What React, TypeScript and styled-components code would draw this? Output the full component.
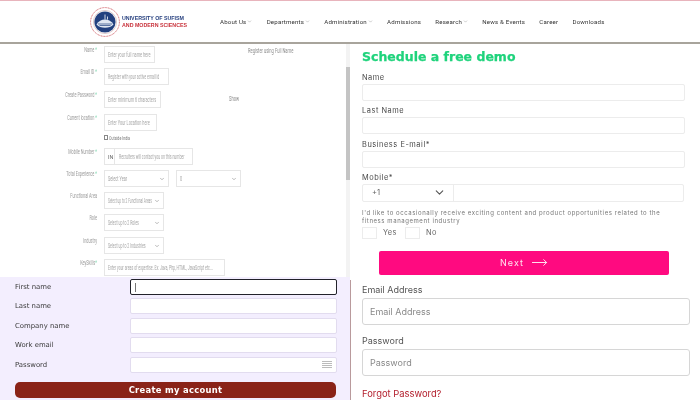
import React from 'react'
import styled, { createGlobalStyle } from 'styled-components'
import { ChevronDown, MoveRight } from 'lucide-react'

const GlobalStyle = createGlobalStyle`
  html, body {
    margin: 0;
    padding: 0;
    background: #fff;
  }
  * {
    box-sizing: border-box;
  }
`

const Page = styled.div`
  width: 700px;
  height: 400px;
  overflow: hidden;
  display: flex;
  flex-direction: column;
  background: #fff;
  filter: blur(0.35px);
`

const Header = styled.header`
  height: 44px;
  flex: none;
  display: flex;
  align-items: center;
  padding-left: 90px;
  border-top: 1px solid #e8b4bc;
  border-bottom: 2px solid #a8a49c;
`

const Brand = styled.div`
  width: 130px;
  display: flex;
  align-items: center;
  gap: 2px;
`

const BrandText = styled.div`
  font-family: 'Liberation Sans', sans-serif;
  font-size: 5.3px;
  font-weight: 700;
  line-height: 7px;
  white-space: nowrap;
  color: #27407f;
  & > span {
    display: block;
    color: #c8313a;
  }
`

const Nav = styled.nav`
  display: flex;
  gap: 14.2px;
`

const NavItem = styled.span`
  display: flex;
  align-items: center;
  gap: 1px;
  font-family: Roboto, sans-serif;
  font-size: 6.1px;
  letter-spacing: 0.2px;
  white-space: nowrap;
  color: #333;
  & svg {
    width: 5px;
    height: 5px;
    color: #888;
  }
`

const Columns = styled.div`
  flex: 1;
  display: grid;
  grid-template-columns: 350px 350px;
  min-height: 0;
`

const LeftColumn = styled.div`
  display: flex;
  flex-direction: column;
  min-height: 0;
`

const RegisterPanel = styled.section`
  height: 233px;
  flex: none;
  display: flex;
  overflow: hidden;
`

const RegisterForm = styled.form`
  flex: 1;
  padding-top: 2px;
  min-width: 0;
`

const Scrollbar = styled.div`
  width: 4px;
  flex: none;
  background: #f3f3f3;
  padding-top: 23px;
`

const ScrollThumb = styled.div`
  height: 113px;
  background: #c4c4c4;
`

const RegRow = styled.div<{ $top: number }>`
  display: flex;
  align-items: flex-start;
  margin-top: ${({ $top }) => $top}px;
`

const RegLabel = styled.label`
  display: block;
  width: 97px;
  flex: none;
  margin-right: 7px;
  text-align: right;
  transform: scaleX(0.6);
  transform-origin: right center;
  font-family: Roboto, sans-serif;
  font-size: 6.4px;
  line-height: 8px;
  white-space: nowrap;
  color: #9a9a9a;
`

const Required = styled.span`
  color: #7fd6b0;
`

const RegField = styled.div<{ $width: number }>`
  width: ${({ $width }) => $width}px;
  height: 17px;
  flex: none;
  display: flex;
  align-items: center;
  padding: 0 3px 0 3px;
  border: 1px solid #e6e6e6;
  font-family: Roboto, sans-serif;
  font-size: 6.4px;
  white-space: nowrap;
  overflow: hidden;
  color: #a6a6a6;
  & svg {
    width: 6px;
    height: 6px;
    flex: none;
    color: #777;
  }
`

const FieldText = styled.span<{ $squeeze?: number }>`
  flex: 1;
  min-width: 0;
  transform: scaleX(${({ $squeeze }) => $squeeze ?? 0.6});
  transform-origin: left center;
`

const PhonePrefix = styled.span`
  width: 10px;
  align-self: stretch;
  flex: none;
  display: flex;
  align-items: center;
  margin: 0 4px 0 -3px;
  padding-left: 3px;
  border-right: 1px solid #e6e6e6;
  font-size: 5.4px;
  color: #666;
`

const SideNote = styled.span<{ $left: number; $drop: number }>`
  margin-left: ${({ $left }) => $left}px;
  margin-top: ${({ $drop }) => $drop}px;
  transform: scaleX(0.64);
  transform-origin: left center;
  font-family: Roboto, sans-serif;
  font-size: 6.4px;
  line-height: 8px;
  white-space: nowrap;
  color: #8c8c8c;
`

const OutsideIndia = styled.div`
  display: flex;
  align-items: center;
  gap: 1px;
  height: 8px;
  margin: 2px 0 0 104px;
  font-family: Roboto, sans-serif;
  font-size: 6px;
  color: #777;
`

const TinyBox = styled.span`
  width: 4px;
  height: 5px;
  flex: none;
  border: 1px solid #888;
`

const SelectGap = styled.span`
  width: 7px;
  flex: none;
`

const SignupPanel = styled.section`
  flex: 1;
  padding: 2px 14px 0 15px;
  background: #f3eefe;
`

const SignupRow = styled.div`
  display: grid;
  grid-template-columns: 115px 1fr;
  align-items: center;
  height: 16px;
  margin-bottom: 3.4px;
  font-family: 'DejaVu Sans', sans-serif;
  font-size: 6.9px;
  font-weight: 500;
  color: #3a3a3a;
`

const SignupInput = styled.input`
  width: 207px;
  height: 16px;
  padding: 0 4px;
  border: 1px solid #e2dcef;
  border-radius: 2px;
  background: #fff;
  outline: none;
`

const PasswordBox = styled.div`
  width: 207px;
  height: 16px;
  display: flex;
  align-items: center;
  justify-content: flex-end;
  padding-right: 4px;
  border: 1px solid #e2dcef;
  border-radius: 2px;
  background: #fff;
  & svg {
    width: 10px;
    height: 7px;
  }
`

const CaretMark = styled.span`
  display: block;
  width: 1px;
  height: 9px;
  background: #777;
`

const FocusBox = styled.div`
  width: 207px;
  height: 16px;
  display: flex;
  align-items: center;
  padding-left: 4px;
  border: 1px solid #22222a;
  border-radius: 2px;
  background: #fff;
`

const CreateButton = styled.button`
  width: 321px;
  height: 16px;
  display: block;
  margin-top: 9.4px;
  padding: 0;
  border: none;
  border-radius: 5px;
  background: #8a2318;
  font-family: 'DejaVu Sans', sans-serif;
  font-size: 8.4px;
  font-weight: 700;
  letter-spacing: 0.3px;
  color: #fff;
`

const RightColumn = styled.div`
  display: flex;
  flex-direction: column;
  min-height: 0;
`

const DemoPanel = styled.section`
  height: 236px;
  flex: none;
  padding: 6px 15px 0 12px;
  overflow: hidden;
`

const DemoTitle = styled.h2`
  margin: 0 0 9px;
  font-family: 'DejaVu Sans', sans-serif;
  font-size: 12.5px;
  line-height: 14px;
  font-weight: 700;
  white-space: nowrap;
  color: #1fd37c;
  -webkit-text-stroke: 0.25px #1fd37c;
`

const DemoLabel = styled.label`
  display: block;
  height: 11px;
  font-family: Inter, sans-serif;
  font-size: 7.4px;
  line-height: 9px;
  letter-spacing: 0.55px;
  color: #4a4a4a;
`

const DemoInput = styled.input`
  display: block;
  width: 323px;
  height: 17px;
  margin-bottom: 5.3px;
  border: 1px solid #ececec;
  border-radius: 2px;
  background: #fff;
  outline: none;
`

const MobileGroup = styled.div`
  width: 322px;
  height: 18px;
  display: flex;
  border: 1px solid #ececec;
  border-radius: 2px;
`

const CountryCode = styled.div`
  width: 91px;
  flex: none;
  display: flex;
  align-items: center;
  justify-content: space-between;
  padding: 0 7px 0 9px;
  border-right: 1px solid #ececec;
  font-family: Inter, sans-serif;
  font-size: 7.6px;
  color: #666;
  & svg {
    width: 13px;
    height: 13px;
    color: #555;
  }
`

const Consent = styled.p`
  max-width: 310px;
  margin: 7px 0 0;
  font-family: Inter, sans-serif;
  font-size: 6px;
  line-height: 8px;
  letter-spacing: 0.58px;
  color: #777;
`

const ChoiceRow = styled.div`
  display: flex;
  align-items: center;
  margin-top: 2px;
  font-family: Inter, sans-serif;
  font-size: 7.4px;
  letter-spacing: 0.4px;
  color: #666;
`

const ChoiceBox = styled.span`
  width: 15px;
  height: 12px;
  margin-right: 6px;
  border: 1px solid #ececec;
`

const ChoiceText = styled.span`
  width: 22px;
`

const NextButton = styled.button`
  width: 290px;
  height: 24px;
  margin: 12px 0 0 17px;
  display: flex;
  align-items: center;
  justify-content: center;
  gap: 7px;
  border: none;
  border-radius: 2px;
  background: #ff0a80;
  font-family: Inter, sans-serif;
  font-size: 9px;
  letter-spacing: 1px;
  color: #ffe3ef;
  & svg {
    width: 17px;
    height: 17px;
    stroke-width: 1.4;
  }
`

const LoginPanel = styled.section`
  flex: 1;
  padding: 3px 9px 0 11px;
  border-left: 1px solid #b99a9c;
  font-family: Inter, sans-serif;
`

const LoginLabel = styled.label`
  display: block;
  height: 13px;
  margin-bottom: 2px;
  font-size: 9px;
  line-height: 13px;
  color: #555;
`

const LoginInput = styled.input`
  display: block;
  width: 328px;
  height: 27px;
  margin-bottom: 9px;
  padding: 0 7px;
  border: 1px solid #d6d6d6;
  border-radius: 3px;
  background: #fff;
  font-family: Inter, sans-serif;
  font-size: 9px;
  outline: none;
  &::placeholder {
    color: #8a8a8a;
  }
`

const ForgotLink = styled.a`
  display: block;
  margin-top: 11px;
  font-size: 9.4px;
  line-height: 13px;
  color: #b3202e;
`

const Logo = () => (
  <svg width="30" height="30" viewBox="0 0 30 30">
    <circle cx="15" cy="15" r="14.4" fill="#fff" stroke="#d2626a" strokeWidth="1" strokeDasharray="1 0.6" />
    <circle cx="15" cy="15" r="11.6" fill="#fff" stroke="#c8a8ac" strokeWidth="0.6" />
    <circle cx="15" cy="15" r="10.6" fill="#23407f" />
    <path d="M6.5 17.5c2-3.6 5-5 8.500-5s6.500 1.400 8.500 5c-2 2.200-5 3.200-8.500 3.200s-6.500-1-8.500-3.200z" fill="#dfe6f2" />
    <path d="M8 17h14M9.500 18.500h11" stroke="#23407f" strokeWidth="0.7" />
    <path d="M15 12.500V7.500M17.500 12.500V9.500" stroke="#fff" strokeWidth="0.8" />
  </svg>
)

const navItems = [
  { label: 'About Us', menu: true },
  { label: 'Departments', menu: true },
  { label: 'Administration', menu: true },
  { label: 'Admissions', menu: false },
  { label: 'Research', menu: true },
  { label: 'News & Events', menu: false },
  { label: 'Career', menu: false },
  { label: 'Downloads', menu: false }
]

const App: React.FC = () => {
  return (
    <>
      <GlobalStyle />
      <Page>
        <Header>
          <Brand>
            <Logo />
            <BrandText>
              UNIVERSITY OF SUFISM
              <span>AND MODERN SCIENCES</span>
            </BrandText>
          </Brand>
          <Nav>
            {navItems.map(item => (
              <NavItem key={item.label}>
                {item.label}
                {item.menu && <ChevronDown />}
              </NavItem>
            ))}
          </Nav>
        </Header>
        <Columns>
          <LeftColumn>
            <RegisterPanel>
              <RegisterForm>
                <RegRow $top={0}>
                  <RegLabel>Name <Required>*</Required></RegLabel>
                  <RegField $width={51}><FieldText>Enter your full name here</FieldText></RegField>
                  <SideNote $left={93} $drop={1}>Register using Full Name</SideNote>
                </RegRow>
                <RegRow $top={5}>
                  <RegLabel>Email ID <Required>*</Required></RegLabel>
                  <RegField $width={65}><FieldText $squeeze={0.55}>Register with your active email id</FieldText></RegField>
                </RegRow>
                <RegRow $top={6}>
                  <RegLabel>Create Password <Required>*</Required></RegLabel>
                  <RegField $width={57}><FieldText>Enter minimum 6 characters</FieldText></RegField>
                  <SideNote $left={68} $drop={4}>Show</SideNote>
                </RegRow>
                <RegRow $top={6}>
                  <RegLabel>Current location <Required>*</Required></RegLabel>
                  <RegField $width={53}><FieldText>Enter Your Location here</FieldText></RegField>
                </RegRow>
                <OutsideIndia>
                  <TinyBox />
                  <FieldText>Outside India</FieldText>
                </OutsideIndia>
                <RegRow $top={7}>
                  <RegLabel>Mobile Number <Required>*</Required></RegLabel>
                  <RegField $width={89}>
                    <PhonePrefix>IN</PhonePrefix>
                    <FieldText $squeeze={0.55}>Recruiters will contact you on this number</FieldText>
                  </RegField>
                </RegRow>
                <RegRow $top={5}>
                  <RegLabel>Total Experience <Required>*</Required></RegLabel>
                  <RegField $width={65}><FieldText>Select Year</FieldText><ChevronDown /></RegField>
                  <SelectGap />
                  <RegField $width={65}><FieldText>0</FieldText><ChevronDown /></RegField>
                </RegRow>
                <RegRow $top={5}>
                  <RegLabel>Functional Area</RegLabel>
                  <RegField $width={60}><FieldText $squeeze={0.5}>Select up to 2 Functional Areas</FieldText><ChevronDown /></RegField>
                </RegRow>
                <RegRow $top={5}>
                  <RegLabel>Role</RegLabel>
                  <RegField $width={60}><FieldText $squeeze={0.55}>Select up to 2 Roles</FieldText><ChevronDown /></RegField>
                </RegRow>
                <RegRow $top={6}>
                  <RegLabel>Industry</RegLabel>
                  <RegField $width={60}><FieldText $squeeze={0.55}>Select up to 2 Industries</FieldText><ChevronDown /></RegField>
                </RegRow>
                <RegRow $top={5}>
                  <RegLabel>KeySkills<Required>*</Required></RegLabel>
                  <RegField $width={121}><FieldText $squeeze={0.55}>Enter your areas of expertise. Ex: Java, Php, HTML, JavaScript etc...</FieldText></RegField>
                </RegRow>
              </RegisterForm>
              <Scrollbar>
                <ScrollThumb />
              </Scrollbar>
            </RegisterPanel>
            <SignupPanel>
              <SignupRow>
                First name
                <FocusBox><CaretMark /></FocusBox>
              </SignupRow>
              <SignupRow>
                Last name
                <SignupInput />
              </SignupRow>
              <SignupRow>
                Company name
                <SignupInput />
              </SignupRow>
              <SignupRow>
                Work email
                <SignupInput />
              </SignupRow>
              <SignupRow>
                Password
                <PasswordBox>
                  <svg viewBox="0 0 10 7">
                    <path d="M0 .5h10M0 2.500h10M0 4.500h10M0 6.500h10" stroke="#aaa" strokeWidth="0.8" />
                  </svg>
                </PasswordBox>
              </SignupRow>
              <CreateButton type="button">Create my account</CreateButton>
            </SignupPanel>
          </LeftColumn>
          <RightColumn>
            <DemoPanel>
              <DemoTitle>Schedule a free demo</DemoTitle>
              <DemoLabel>Name</DemoLabel>
              <DemoInput />
              <DemoLabel>Last Name</DemoLabel>
              <DemoInput />
              <DemoLabel>Business E-mail*</DemoLabel>
              <DemoInput />
              <DemoLabel>Mobile*</DemoLabel>
              <MobileGroup>
                <CountryCode>+1<ChevronDown /></CountryCode>
              </MobileGroup>
              <Consent>
                I'd like to occasionally receive exciting content and product opportunities related to the fitness management industry
              </Consent>
              <ChoiceRow>
                <ChoiceBox />
                <ChoiceText>Yes</ChoiceText>
                <ChoiceBox />
                <span>No</span>
              </ChoiceRow>
              <NextButton type="button">Next <MoveRight /></NextButton>
            </DemoPanel>
            <LoginPanel>
              <LoginLabel>Email Address</LoginLabel>
              <LoginInput placeholder="Email Address" />
              <LoginLabel>Password</LoginLabel>
              <LoginInput placeholder="Password" />
              <ForgotLink>Forgot Password?</ForgotLink>
            </LoginPanel>
          </RightColumn>
        </Columns>
      </Page>
    </>
  )
}

export default App
